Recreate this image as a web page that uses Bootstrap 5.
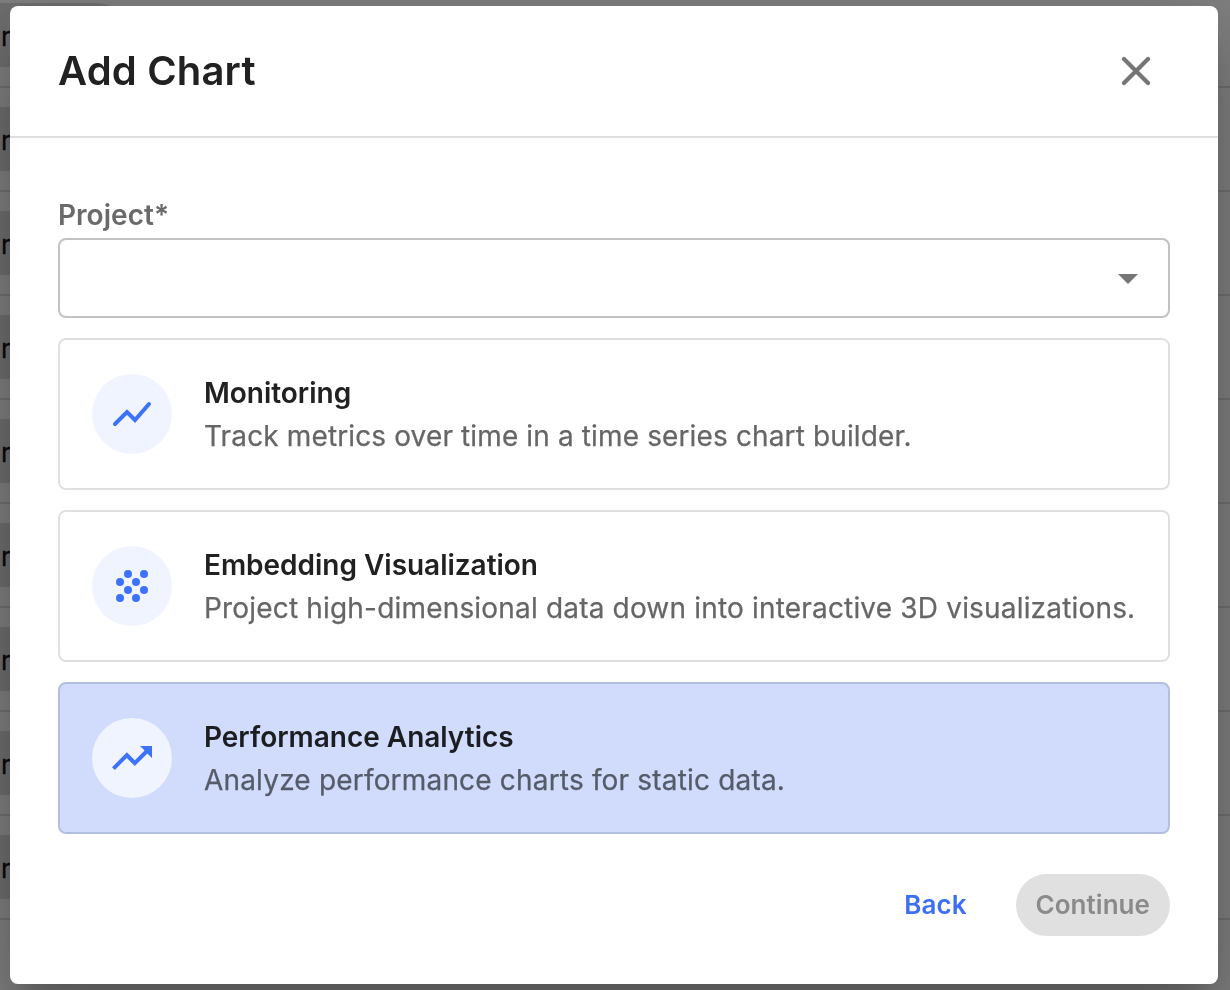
<!DOCTYPE html>
<html lang="en">
<head>
<meta charset="utf-8">
<meta name="viewport" content="width=device-width, initial-scale=1">
<title>Add Chart</title>
<link href="https://cdn.jsdelivr.net/npm/bootstrap@5.3.0/dist/css/bootstrap.min.css" rel="stylesheet">
<style>
  body { font-family: Inter, "Liberation Sans", sans-serif; background: #fff; height: 990px; color: #212121; }
  .page-rows { margin-top: -16px; }
  .page-row { height: 104px; border-bottom: 2px solid #dedede; padding: 19px 0; }
  .tag-pill { width: 164px; height: 64px; margin-left: -36px; padding-left: 37px; border-radius: 32px; background: #dcdcdc; font-size: 26px; line-height: 67px; color: #111; -webkit-text-stroke: .3px #111; }
  .scrim { background: rgba(0,0,0,.5); padding: 6px 12px 6px 10px; }
  .dialog-box { height: 978px; border: 0; border-radius: 8px; box-shadow: 0 22px 30px -14px rgba(0,0,0,.2), 0 48px 76px 6px rgba(0,0,0,.14), 0 18px 92px 16px rgba(0,0,0,.12); }
  .dialog-head { height: 132px; border-bottom: 2px solid #e0e0e0; padding: 0 62px 0 48px; }
  .dialog-title { font-size: 40px; line-height: 48px; font-weight: 600; letter-spacing: .17px; }
  .dialog-main { padding: 60px 48px 0; }
  .field-label { font-size: 28px; line-height: 34px; font-weight: 600; letter-spacing: .03px; color: #6a6a6a; margin-bottom: 6px; }
  .project-select { height: 80px; border: 2px solid #c2c2c2; border-radius: 8px; padding: 2px 30px 0 0; }
  .option { height: 152px; margin-top: 20px; border: 2px solid #e0e0e0; border-radius: 8px; padding: 0 32px; gap: 32px; }
  .option.chosen { background: #d1dbfc; border-color: #b3bfe0; color: #1b1d21; }
  .disc { width: 80px; height: 80px; background: #f0f4ff; color: #3d73fb; }
  .option-name { font-size: 28px; line-height: 42px; font-weight: 600; letter-spacing: -.02px; padding-top: 2px; }
  .option-text { font-size: 28px; line-height: 44px; letter-spacing: .18px; color: #666; -webkit-text-stroke: .25px currentColor; }
  .option-text.snug { letter-spacing: .13px; }
  .chosen .option-text { color: #555b69; }
  .actions { margin-top: 40px; gap: 29px; }
  .actions .btn { height: 62px; border: 0; border-radius: 31px; padding: 0 20px 2px; font-size: 26px; font-weight: 600; letter-spacing: .05px; }
  .back-btn, .back-btn:hover { color: #3d6ef7; }
  .actions .btn:disabled { background: #e0e0e0; color: #8a8a8a; opacity: 1; }
</style>
</head>
<body class="overflow-hidden">
<div class="page-rows">
  <div class="page-row"><div class="tag-pill">r</div></div>
  <div class="page-row"><div class="tag-pill">r</div></div>
  <div class="page-row"><div class="tag-pill">r</div></div>
  <div class="page-row"><div class="tag-pill">r</div></div>
  <div class="page-row"><div class="tag-pill">r</div></div>
  <div class="page-row"><div class="tag-pill">r</div></div>
  <div class="page-row"><div class="tag-pill">r</div></div>
  <div class="page-row"><div class="tag-pill">r</div></div>
  <div class="page-row"><div class="tag-pill">r</div></div>
</div>
<div class="scrim position-fixed top-0 start-0 w-100 h-100">
  <div class="dialog-box modal-content bg-white" role="dialog" aria-label="Add Chart">
    <div class="dialog-head d-flex align-items-center justify-content-between">
      <h1 class="dialog-title m-0">Add Chart</h1>
      <button type="button" class="btn p-0 border-0 d-flex" aria-label="Close">
        <svg width="40" height="40" viewBox="0 0 40 40" fill="none" stroke="#757575" stroke-width="4.200" stroke-linecap="round"><path d="M8 8 32 32M32 8 8 32"/></svg>
      </button>
    </div>
    <div class="dialog-main">
      <div class="field-label">Project*</div>
      <div class="project-select d-flex align-items-center justify-content-end" role="combobox" aria-label="Project">
        <svg width="20" height="10" viewBox="0 0 20 10" fill="#757575"><path d="M0 0H20L10 10Z"/></svg>
      </div>
      <div class="option d-flex align-items-center">
        <div class="disc rounded-circle d-flex align-items-center justify-content-center flex-shrink-0">
          <svg width="48" height="48" viewBox="0 0 48 48" fill="none" stroke="currentColor" stroke-width="4"><path d="M7 34 19 22 27 30 41 14" stroke-linecap="round"/></svg>
        </div>
        <div><div class="option-name">Monitoring</div><div class="option-text snug">Track metrics over time in a time series chart builder.</div></div>
      </div>
      <div class="option d-flex align-items-center">
        <div class="disc rounded-circle d-flex align-items-center justify-content-center flex-shrink-0">
          <svg width="48" height="48" viewBox="0 0 48 48" fill="currentColor"><circle cx="20" cy="12" r="4"/><circle cx="36" cy="12" r="4"/><circle cx="12" cy="20" r="4"/><circle cx="28" cy="20" r="4"/><circle cx="20" cy="28" r="4"/><circle cx="36" cy="28" r="4"/><circle cx="12" cy="36" r="4"/><circle cx="28" cy="36" r="4"/></svg>
        </div>
        <div><div class="option-name">Embedding Visualization</div><div class="option-text text-nowrap">Project high-dimensional data down into interactive 3D visualizations.</div></div>
      </div>
      <div class="option chosen d-flex align-items-center">
        <div class="disc rounded-circle d-flex align-items-center justify-content-center flex-shrink-0">
          <svg width="48" height="48" viewBox="0 0 24 24" fill="currentColor"><path d="m16 6 2.290 2.290-4.880 4.880-4-4L2 16.590 3.410 18l6-6 4 4 6.300-6.290L22 12V6z"/></svg>
        </div>
        <div><div class="option-name">Performance Analytics</div><div class="option-text">Analyze performance charts for static data.</div></div>
      </div>
      <div class="actions d-flex justify-content-end">
        <button type="button" class="btn back-btn">Back</button>
        <button type="button" class="btn" disabled>Continue</button>
      </div>
    </div>
  </div>
</div>
<script src="https://cdn.jsdelivr.net/npm/bootstrap@5.3.0/dist/js/bootstrap.bundle.min.js"></script>
</body>
</html>
